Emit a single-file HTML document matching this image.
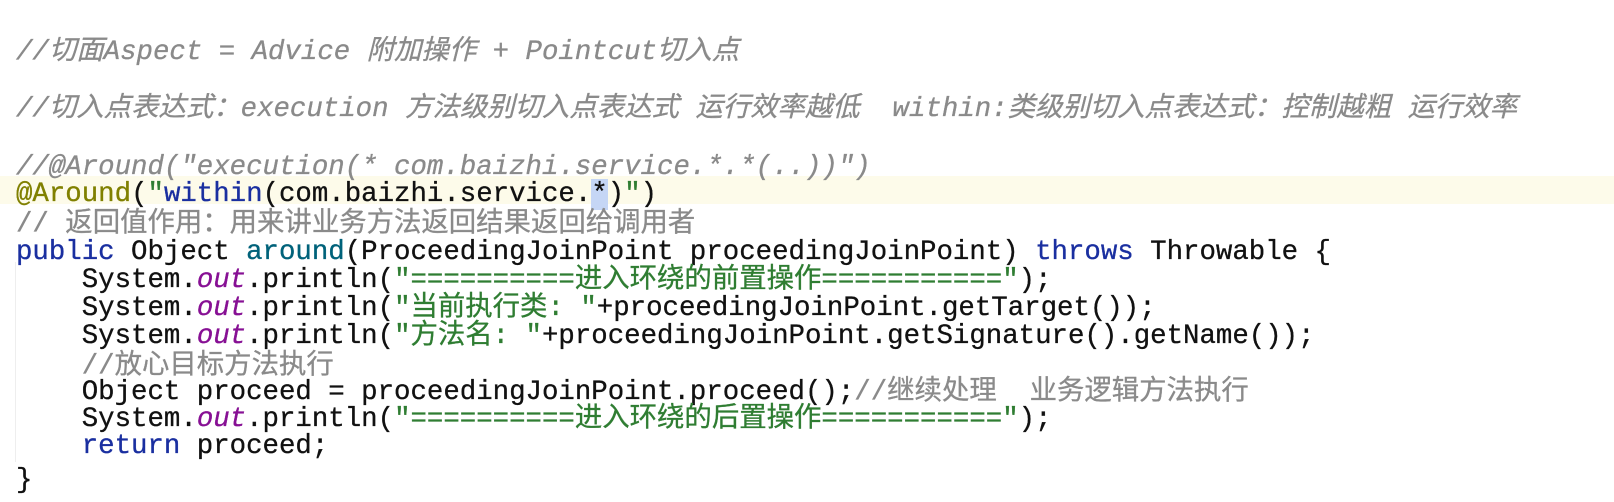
<!DOCTYPE html>
<html><head><meta charset="utf-8"><style>
body{margin:0;width:1614px;height:502px;background:#fff;overflow:hidden;position:relative;font-family:"Liberation Mono","Noto Sans CJK SC",monospace;font-size:27.4px;color:#111}
.l{position:absolute;left:16px;white-space:pre;line-height:28px;height:28px;-webkit-text-stroke:0.3px currentColor}
.c{color:#8a8a8a;font-style:italic}
.cn{color:#8a8a8a}
.s{color:#2f7d32}
.k{color:#1a2fa0}
.a{color:#808000}
.m{color:#00627a}
.o{color:#871094;font-style:italic}
.hl{position:absolute;left:0;top:176px;width:1614px;height:28px;background:#fdfbea}
.gut{position:absolute;left:15px;top:262px;width:1px;height:200px;background:#eee}
</style></head><body>
<div class="hl"></div>
<div class="gut"></div>
<div class="l c" style="top:39px">//切面Aspect = Advice 附加操作 + Pointcut切入点</div>
<div class="l c" style="top:96px">//切入点表达式：execution 方法级别切入点表达式 运行效率越低  within:类级别切入点表达式：控制越粗 运行效率</div>
<div class="l c" style="top:154px">//@Around("execution(* com.baizhi.service.*.*(..))")</div>
<div class="l" style="top:181px"><span class="a">@Around</span>(<span class="s">"</span><span class="k">within</span>(com.baizhi.service.<span style="background:#c5d6f5">*</span>)<span class="s">"</span>)</div>
<div class="l cn" style="top:211px">// 返回值作用：用来讲业务方法返回结果返回给调用者</div>
<div class="l" style="top:239px"><span class="k">public</span> Object <span class="m">around</span>(ProceedingJoinPoint proceedingJoinPoint) <span class="k">throws</span> Throwable {</div>
<div class="l" style="top:267px">    System.<span class="o">out</span>.println(<span class="s">"==========进入环绕的前置操作==========="</span>);</div>
<div class="l" style="top:295px">    System.<span class="o">out</span>.println(<span class="s">"当前执行类: "</span>+proceedingJoinPoint.getTarget());</div>
<div class="l" style="top:323px">    System.<span class="o">out</span>.println(<span class="s">"方法名: "</span>+proceedingJoinPoint.getSignature().getName());</div>
<div class="l cn" style="top:353px">    //放心目标方法执行</div>
<div class="l" style="top:379px">    Object proceed = proceedingJoinPoint.proceed();<span class="cn">//继续处理  业务逻辑方法执行</span></div>
<div class="l" style="top:406px">    System.<span class="o">out</span>.println(<span class="s">"==========进入环绕的后置操作==========="</span>);</div>
<div class="l" style="top:433px">    <span class="k">return</span> proceed;</div>
<div class="l" style="top:467px">}</div>
</body></html>
